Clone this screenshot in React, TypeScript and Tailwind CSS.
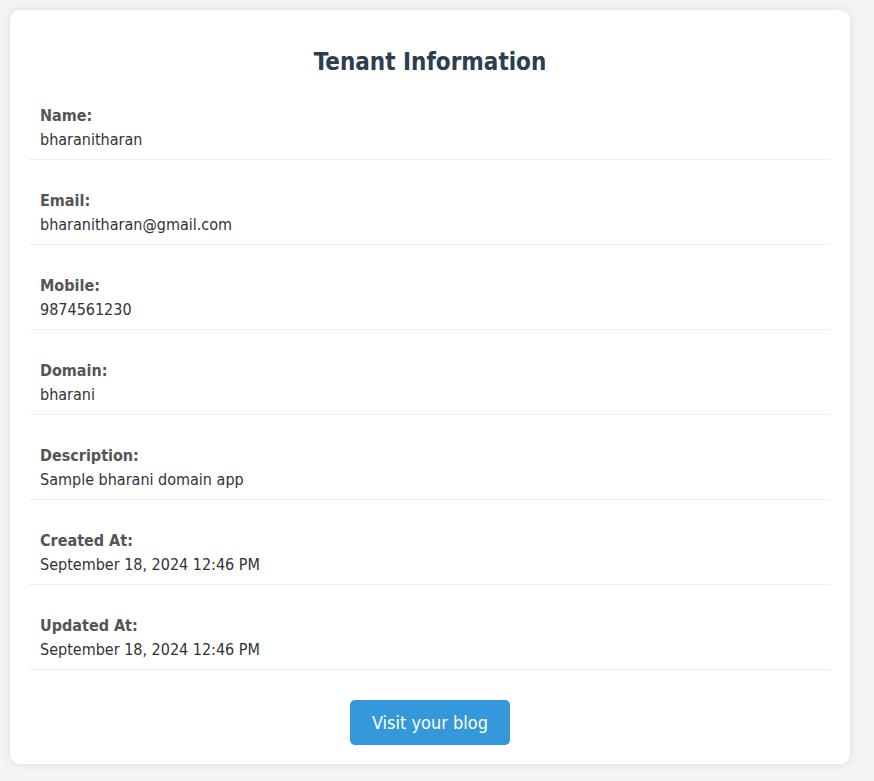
const rows = [
  { label: 'Name:', value: 'bharanitharan' },
  { label: 'Email:', value: 'bharanitharan@gmail.com' },
  { label: 'Mobile:', value: '9874561230' },
  { label: 'Domain:', value: 'bharani' },
  { label: 'Description:', value: 'Sample bharani domain app' },
  { label: 'Created At:', value: 'September 18, 2024 12:46 PM' },
  { label: 'Updated At:', value: 'September 18, 2024 12:46 PM' },
];

export default function App() {
  return (
    <div className="min-h-screen bg-[#f4f4f4] p-[10px] font-['DejaVu_Sans_Condensed','DejaVu_Sans',sans-serif]">
      <div className="w-[840px] bg-white rounded-[10px] shadow-[0_0_10px_rgba(0,0,0,0.1)] px-5 pt-[37px] pb-[19px]">
        <h2 className="text-center text-[24px] leading-[30px] font-bold text-[#2c3e50] mb-[13px]">
          Tenant Information
        </h2>

        {rows.map((row) => (
          <div key={row.label} className="px-[10px] pt-4 pb-[9px] mb-[15px] border-b border-[#eeeeee]">
            <div className="text-[16px] leading-5 font-bold text-[#555555] mb-1">{row.label}</div>
            <div className="text-[16px] leading-5 text-[#333333]">{row.value}</div>
          </div>
        ))}

        <div className="flex justify-center pt-[15px]">
          <button className="w-[160px] h-[45px] rounded-[5px] bg-[#3498db] text-white text-[18px]">
            Visit your blog
          </button>
        </div>
      </div>
    </div>
  );
}
